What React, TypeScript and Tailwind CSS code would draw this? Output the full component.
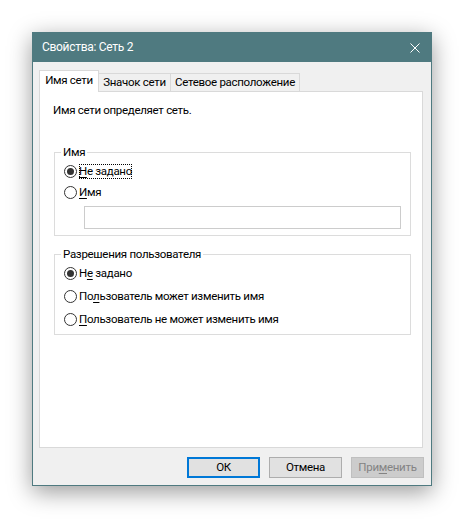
function Radio({ checked, children, focus, h = "h-[23px]" }: { checked?: boolean; children: React.ReactNode; focus?: boolean; h?: string }) {
  return (
    <div className={"flex items-center " + h}>
      <span className="w-[13px] h-[13px] rounded-full border border-[#333333] bg-white flex items-center justify-center shrink-0">
        {checked && <span className="w-[7px] h-[7px] rounded-full bg-[#333333]" />}
      </span>
      <span className={"ml-[2px] leading-[15px] whitespace-nowrap " + (focus ? "outline outline-1 outline-dotted outline-[#000] -outline-offset-1" : "")}>{children}</span>
    </div>
  )
}

function U({ children }: { children: React.ReactNode }) {
  return <span className="underline underline-offset-2">{children}</span>
}

function App() {
  return (
    <div className="w-[464px] h-[519px] bg-white pt-[32px] pl-[32px] text-[11.5px] tracking-[-0.3px] text-black" style={{ fontFamily: 'Roboto, "Liberation Sans", sans-serif' }}>
      <div className="w-[400px] h-[454px] border border-[#4f7a80] bg-[#f0f0f0] flex flex-col shadow-[0_6px_22px_rgba(0,0,0,0.4)]">
        {/* title */}
        <div className="h-[29px] shrink-0 bg-[#4f7a80] flex items-center justify-between pl-[9px] pr-[10px] text-white">
          <span className="leading-[15px] text-[12px]">Свойства: Сеть 2</span>
          <svg width="10" height="10" viewBox="0 0 10 10" className="mr-[1px]">
            <path d="M0.5 0.5L9.5 9.5M9.5 0.5L0.5 9.5" stroke="#fff" strokeWidth="1" />
          </svg>
        </div>

        {/* tabs */}
        <div className="flex items-end pl-[6px] h-[29px] shrink-0 whitespace-nowrap">
          <div className="h-[22px] w-[60px] bg-white border border-b-0 border-[#d9d9d9] flex items-center justify-center relative top-[1px] z-10 pb-[1px]">Имя сети</div>
          <div className="h-[18px] w-[72px] border border-l-0 border-b-0 border-[#d9d9d9] flex items-center justify-center">Значок сети</div>
          <div className="h-[18px] w-[129px] border border-l-0 border-b-0 border-[#d9d9d9] flex items-center justify-center">Сетевое расположение</div>
        </div>

        {/* panel */}
        <div className="ml-[6px] w-[384px] h-[357px] shrink-0 bg-white border border-[#d9d9d9] flex flex-col">
          <div className="pl-[13px] pt-[11px] leading-[15px]">Имя сети определяет сеть.</div>

          <fieldset className="ml-[14px] mt-[27px] w-[357px] h-[91px] border border-[#dcdcdc] pl-[9px]">
            <legend className="-ml-[3px] px-[2px] leading-[14px]">Имя</legend>
            <div className="mt-[2px]">
              <Radio checked focus h="h-[21px]"><U>Н</U>е задано</Radio>
              <Radio h="h-[21px]"><U>И</U>мя</Radio>
            </div>
            <div className="ml-[20px] mt-[3px] w-[317px] h-[23px] border border-[#cccccc] bg-white" />
          </fieldset>

          <fieldset className="ml-[14px] mt-[11px] w-[357px] h-[88px] border border-[#dcdcdc] pl-[9px]">
            <legend className="-ml-[3px] px-[2px] leading-[14px]">Разрешения пользователя</legend>
            <div className="mt-[1px]">
              <Radio checked>Н<U>е</U> задано</Radio>
              <Radio>По<U>л</U>ьзователь может изменить имя</Radio>
              <Radio><U>П</U>ользователь не может изменить имя</Radio>
            </div>
          </fieldset>
        </div>

        {/* buttons */}
        <div className="flex justify-end gap-[9px] pr-[7px] mt-[9px]">
          <button className="w-[73px] h-[21px] bg-[#e1e1e1] border-2 border-[#0078d7] leading-[15px]">ОК</button>
          <button className="w-[73px] h-[21px] bg-[#e1e1e1] border border-[#adadad] leading-[15px]">Отмена</button>
          <button className="w-[73px] h-[21px] bg-[#cccccc] border border-[#bfbfbf] text-[#838383] leading-[15px]">При<U>м</U>енить</button>
        </div>
      </div>
    </div>
  )
}

export default App
